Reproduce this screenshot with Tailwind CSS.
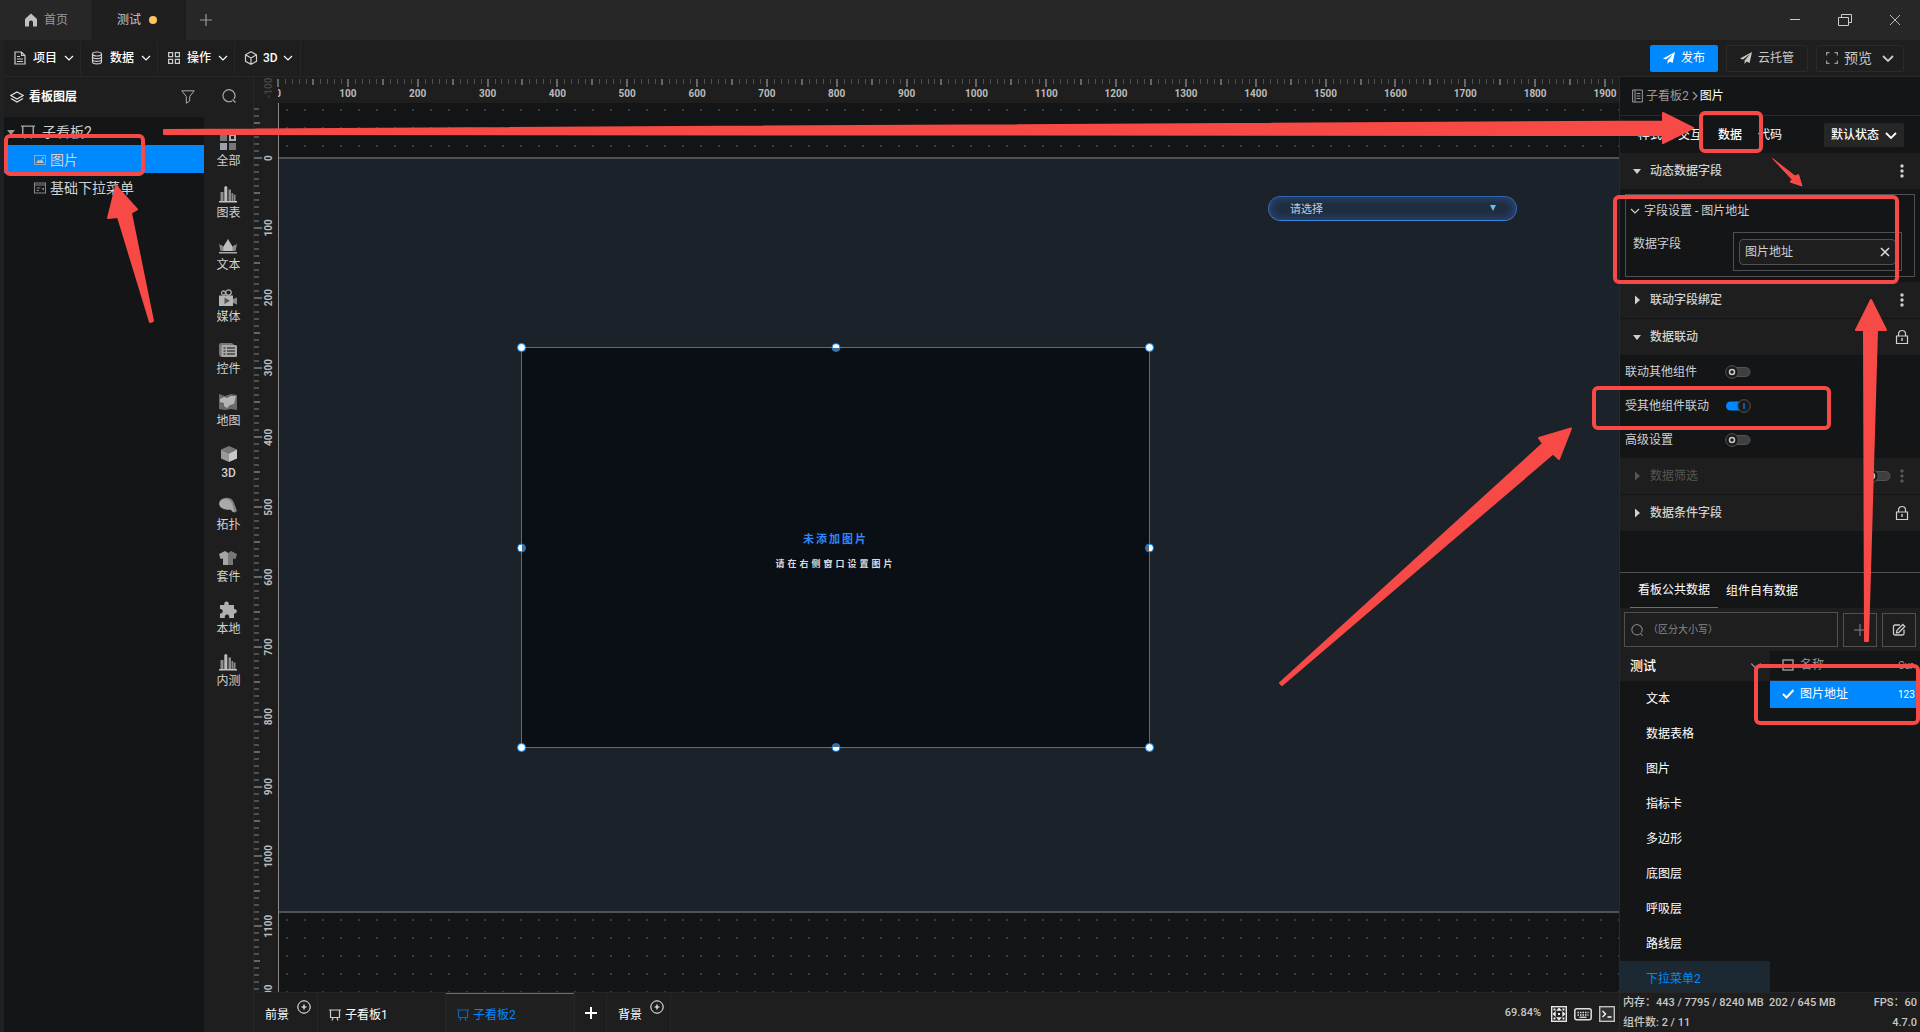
<!DOCTYPE html>
<html lang="zh-CN">

<head>
  <meta charset="UTF-8">
  <meta name="viewport" content="width=device-width, initial-scale=1.0">
  <title>测试</title>
  <script src="https://cdn.jsdelivr.net/npm/@tailwindcss/browser@4"></script>
  <style>
    body {
      font-family: Roboto, "Noto Sans CJK SC", sans-serif;
    }
  </style>
</head>

<body class="relative flex flex-col h-screen overflow-hidden bg-[#1f2125] text-xs text-[#d0d0d0]">

  <!-- icons -->
  <svg class="hidden">
    <symbol id="i-down" viewBox="0 0 10 10"><path d="M1 3l4 4 4-4" fill="none" stroke="currentColor" stroke-width="1.2" /></symbol>
    <symbol id="i-down-bold" viewBox="0 0 12 12"><path d="M1 4l5 5 5-5" fill="none" stroke="currentColor" stroke-width="1.8" /></symbol>
    <symbol id="i-tri-down" viewBox="0 0 10 10"><path d="M1 3h8L5 8z" fill="currentColor" /></symbol>
    <symbol id="i-tri-right" viewBox="0 0 10 10"><path d="M3 0.5v9L8 5z" fill="currentColor" /></symbol>
    <symbol id="i-more" viewBox="0 0 4 14"><g fill="currentColor"><circle cx="2" cy="2" r="1.7" /><circle cx="2" cy="7" r="1.7" /><circle cx="2" cy="12" r="1.7" /></g></symbol>
    <symbol id="i-lock" viewBox="0 0 14 16"><path d="M1.5 7h11v7.5h-11zM3.5 7V5a3.5 3.5 0 0 1 7 0v2" fill="none" stroke="currentColor" stroke-width="1.2" /><path d="M7 9v3" stroke="currentColor" stroke-width="1.4" /></symbol>
    <symbol id="i-send" viewBox="0 0 12 12"><path d="M12 0L0 6.4l3 1.2L10 2 4.6 8.4V12l2-2.6L9.6 11z" fill="currentColor" /></symbol>
    <symbol id="i-search" viewBox="0 0 14 14"><path d="M10 11.9A6 6 0 1 1 12 10M10.5 10.5L13.5 13.5" fill="none" stroke="currentColor" stroke-width="1.2" /></symbol>
    <symbol id="i-board" viewBox="0 0 12 12"><path d="M0 1h12M1.5 1v7.5h9V1M4 9l-1 2.5M8 9l1 2.5" fill="none" stroke="currentColor" stroke-width="1.2" /></symbol>
    <symbol id="i-plus-circle" viewBox="0 0 14 14"><circle cx="7" cy="7" r="6.2" fill="none" stroke="currentColor" /><path d="M4.5 7h5M7 4.5v5" stroke="currentColor" stroke-width="1.2" /></symbol>
    <symbol id="i-off" viewBox="0 0 26 14"><rect x="6" y="2.5" width="19" height="9" rx="4.5" fill="#3d3f40" stroke="#555" /><circle cx="7" cy="7" r="6.3" fill="#1a1a1a" stroke="#555" /><circle cx="7" cy="7" r="2.5" fill="none" stroke="#ccc" stroke-width="1.5" /></symbol>
    <symbol id="i-on" viewBox="0 0 26 14"><rect x="1" y="2.5" width="19" height="9" rx="4.5" fill="#0088ff" /><circle cx="19" cy="7" r="6.3" fill="#1a1a1a" stroke="#555" /><path d="M19 4v6" stroke="#0a66bb" stroke-width="1.8" /></symbol>
    <symbol id="i-chart" viewBox="0 0 18 18"><path d="M1.5 7h3v9h-3zM9.500 4.500H12V16H9.500zM12.500 8h1.500v8h-1.500zM14.500 9.500H16.500V16h-2z" fill="#8c8c8c" /><path d="M5.300 2.500Q5.300 1 6.800 1T8.300 2.500V16h-3z" fill="#bcbcbc" /><path d="M0 16h18v1.500H0z" fill="#c4c4c4" /></symbol>
  </svg>

  <header class="flex h-10 shrink-0 bg-[#272727] text-[#9a9a9a]">
    <a href="#" class="flex w-[92px] items-center justify-center gap-1.5">
      <svg class="size-3.5" viewBox="0 0 14 14"><path d="M7 0.5L13 6v7.5H9V9.5a2 2 0 0 0-4 0v4H1V6z" fill="#c0c0c0" /></svg>首页
    </a>
    <a href="#" class="flex w-[94px] items-center gap-2 border-x border-[#1a1a1a] bg-[#1f1f1f] pl-6 text-[#c8c8c8]">测试<span class="size-2 rounded-full bg-[#ffc45c]"></span></a>
    <button class="w-10" aria-label="新建标签"><svg class="mx-auto size-3" viewBox="0 0 12 12"><path d="M6 0v12M0 6h12" stroke="#9a9a9a" stroke-width="1.2" /></svg></button>
    <div class="ml-auto flex">
      <button class="w-[50px]" aria-label="最小化"><svg class="mx-auto h-3 w-2.5" viewBox="0 0 10 12"><path d="M0 5.5h10" stroke="#ccc" /></svg></button>
      <button class="w-[50px]" aria-label="还原"><svg class="mx-auto h-3 w-3.5" viewBox="0 0 14 12"><path d="M0.5 3.5h10v8H0.5zM3.5 3V0.5h10v8H11" fill="none" stroke="#ccc" /></svg></button>
      <button class="w-[50px]" aria-label="关闭"><svg class="mx-auto size-3" viewBox="0 0 12 12"><path d="M1 1l10 10M11 1L1 11" stroke="#bbb" /></svg></button>
    </div>
  </header>

  <div class="ml-1 flex min-h-0 flex-1 flex-col">
    <nav class="flex h-[37px] shrink-0 items-center border-b border-[#272727] bg-[#1e1e1e] font-medium text-white">
      <button class="flex h-[34px] w-[77px] items-center gap-[7px] border-r border-[#262626] pl-2.5">
        <svg class="h-3.5 w-3" viewBox="0 0 12 14"><path d="M1 1h6.5L11 4.5V13H1zM3 5.5h3M3 8h6M3 10.5h6M7.5 1v3.500H11" fill="none" stroke="#ccc" stroke-width="1.2" /></svg>
        项目<svg class="size-2.5"><use href="#i-down" /></svg>
      </button>
      <button class="flex h-[34px] w-[77px] items-center gap-[7px] border-r border-[#262626] pl-2.5">
        <svg class="h-3.5 w-3" viewBox="0 0 12 14"><g fill="none" stroke="#ccc" stroke-width="1.2"><ellipse cx="6" cy="3" rx="4.5" ry="2" /><path d="M1.5 3v8c0 2.5 9 2.5 9 0V3M1.5 5.7c0 2.5 9 2.5 9 0M1.5 8.4c0 2.5 9 2.5 9 0" /></g></svg>
        数据<svg class="size-2.5"><use href="#i-down" /></svg>
      </button>
      <button class="flex h-[34px] w-[77px] items-center gap-[7px] border-r border-[#262626] pl-2.5">
        <svg class="size-3" viewBox="0 0 12 12"><path d="M.6.6h4v4h-4zM7.4.6h4v4h-4zM.6 7.4h4v4h-4zM7.4 7.4h4v4h-4z" fill="none" stroke="#ccc" stroke-width="1.2" /></svg>
        操作<svg class="size-2.5"><use href="#i-down" /></svg>
      </button>
      <button class="flex h-[34px] w-[66px] items-center gap-[5px] border-r border-[#262626] pl-[9px]">
        <svg class="size-3.5" viewBox="0 0 14 14"><path d="M7 .8l5.500 3v6.500L7 13.300l-5.500-3V3.800zM1.500 3.800L7 7l5.500-3.200M7 7v6" fill="none" stroke="#ccc" stroke-width="1.2" /></svg>
        3D<svg class="size-2.5"><use href="#i-down" /></svg>
      </button>
      <div class="ml-auto mr-4 flex gap-2 font-normal">
        <button class="flex h-[27px] w-[68px] items-center justify-center gap-1.5 rounded-xs bg-[#0088ff]"><svg class="size-3"><use href="#i-send" /></svg>发布</button>
        <button class="flex h-[27px] w-[82px] items-center justify-center gap-1.5 rounded-xs border border-[#2a2a2a] text-[#c8c8c8]"><svg class="size-3"><use href="#i-send" /></svg>云托管</button>
        <button class="flex h-[27px] w-[88px] items-center justify-center gap-1.5 rounded-xs border border-[#2a2a2a] text-sm text-[#c8c8c8]">
          <svg class="size-3" viewBox="0 0 12 12"><path d="M.6 3.5V.6h2.9M8.500.6h2.900v2.900M11.400 8.500v2.900H8.500M3.500 11.400H.6V8.500" fill="none" stroke="#999" stroke-width="1.2" /></svg>
          预览<svg class="ml-1 size-3"><use href="#i-down-bold" /></svg>
        </button>
      </div>
    </nav>

    <div class="flex min-h-0 flex-1">
      <!-- layers -->
      <aside class="w-[200px] shrink-0 bg-[#141517]">
        <div class="flex h-10 items-center gap-[5px] bg-[#1e1e1e] pl-1.5 pr-[9px] font-bold text-white">
          <svg class="size-3.5" viewBox="0 0 14 14"><path d="M7 2l6.2 3.5L7 9 .8 5.5zM1 8.5L7 12l6-3.500" fill="none" stroke="#e0e0e0" stroke-width="1.3" /></svg>
          看板图层
          <svg class="ml-auto size-3.5" viewBox="0 0 14 14"><path d="M.8.8h12.4L8.7 6.5V11l-3.400 2.300V6.500z" fill="none" stroke="#aaa" /></svg>
        </div>
        <ul class="text-sm">
          <li class="flex h-7 items-center gap-[5px] pl-0.5 pt-0.5">
            <svg class="size-2.5 text-[#999]"><use href="#i-tri-down" /></svg>
            <svg class="mr-0.5 size-3.5 text-[#aaa]"><use href="#i-board" /></svg>子看板2
          </li>
          <li class="flex h-7 items-center gap-1 bg-[#0088ff] pl-[30px] pt-0.5">
            <svg class="size-3" viewBox="0 0 12 12"><rect x=".5" y="1.5" width="11" height="9" fill="none" stroke="#9ba7b5" /><path d="M2 9l2.500-3.500L6 7l1.500-2L10 9z" fill="#b8c0c8" /><circle cx="9" cy="4" r=".9" fill="#b8c0c8" /></svg>图片
          </li>
          <li class="flex h-7 items-center gap-1 pl-[30px] pt-0.5">
            <svg class="size-3" viewBox="0 0 12 12"><rect x=".5" y="1" width="11" height="10" fill="none" stroke="#888" /><path d="M0 3h12M2.500 6h4M2.500 8.500h2.500" stroke="#888" stroke-width="1.2" /><path d="M10 5.500v3L7.500 7z" fill="#888" /></svg>基础下拉菜单
          </li>
        </ul>
      </aside>

      <!-- component library -->
      <nav class="flex w-[50px] shrink-0 flex-col items-center border-r border-[#282828] bg-[#1e1e1e] leading-4">
        <button class="flex h-14 items-start pt-3" aria-label="搜索"><svg class="size-3.5 text-[#aaa]"><use href="#i-search" /></svg></button>
        <button class="flex h-[52px] flex-col items-center gap-0.5"><svg class="size-[18px]" viewBox="0 0 18 18"><path d="M1 1h7v7H1zM10 10h7v7h-7z" fill="#777" /><path d="M1 10h7v7H1z" fill="#9da0a8" /><path d="M11 2h5v5h-5z" fill="#1e1e1e" stroke="#aaadb5" stroke-width="2" /></svg>全部</button>
        <button class="flex h-[52px] flex-col items-center gap-0.5"><svg class="size-[18px]"><use href="#i-chart" /></svg>图表</button>
        <button class="flex h-[52px] flex-col items-center gap-0.5"><svg class="size-[18px]" viewBox="0 0 18 18"><path d="M0 7l5 2.500L9 2l4 7.500L18 7l-1.500 7h-15z" fill="#888" /><path d="M9 2c1 4 5.500 5 4.500 12h-9C3.500 7 8 6 9 2z" fill="#bdbdbd" /><path d="M0 15h18v1.500H0z" fill="#aaa" /></svg>文本</button>
        <button class="flex h-[52px] flex-col items-center gap-0.5"><svg class="size-[18px]" viewBox="0 0 18 18"><circle cx="4.5" cy="4" r="2" fill="none" stroke="#aaa" stroke-width="1.3" /><circle cx="9.5" cy="3.5" r="2.7" fill="none" stroke="#aaa" stroke-width="1.3" /><path d="M0 6.5h14V17H0z" fill="#b5b5b5" /><path d="M14 10l4-1.500v7L14 14z" fill="#888" /><path d="M5.500 8.500l5.500 3.300-5.500 3.200z" fill="#555" /></svg>媒体</button>
        <button class="flex h-[52px] flex-col items-center gap-0.5"><svg class="size-[18px]" viewBox="0 0 18 18"><path d="M2 2h11l2 2H4v12H2q-2-1-2-3V4q0-2 2-2z" fill="#777" /><rect x="2.5" y="4" width="15.5" height="12" rx="1.5" fill="#aaa" /><path d="M4.500 7h2M8 7h8M4.500 10h2M8 10h8M4.500 13h2M8 13h8" stroke="#444" stroke-width="1.3" /></svg>控件</button>
        <button class="flex h-[52px] flex-col items-center gap-0.5"><svg class="size-[18px]" viewBox="0 0 18 18"><path d="M0 1l6 2 6-2 6 1v15l-6-1-6 1-6-1z" fill="#6a6a6a" /><path d="M1 6l4-2 3 1 4-2 5 0-1 4-1 4-4 1-3 3-3-2 0-3-4-1z" fill="#b5b5b5" /></svg>地图</button>
        <button class="flex h-[52px] flex-col items-center gap-0.5 font-medium"><svg class="size-[18px]" viewBox="0 0 18 18"><path d="M9 1l8 3.500L9 8.500 1 4.500z" fill="#777" /><path d="M1 4.500l8 4V17l-8-3.500z" fill="#999" /><path d="M17 4.500l-8 4V17l8-3.500z" fill="#c8c8c8" /></svg>3D</button>
        <button class="flex h-[52px] flex-col items-center gap-0.5"><svg class="size-[18px]" viewBox="0 0 18 18"><path d="M0 7q0-5 6-6 6-1 8.500 4 1 2 3.500 9l-2 1.500q-3 0-4-2.500Q1 13 0 7z" fill="#858585" /><path d="M.5 8Q0 3 5.500 2q5-.5 7.500 4.500L15.500 15q-2 0-4-3Q2 13 .5 8z" fill="#aaa" /></svg>拓扑</button>
        <button class="flex h-[52px] flex-col items-center gap-0.5"><svg class="size-[18px]" viewBox="0 0 18 18"><path d="M6 2L0 5l1.500 5L4 9.500V16h5V4z" fill="#a5a5a5" /><path d="M12 2l6 3-1.500 5L14 9.500V16H9V4z" fill="#777" /></svg>套件</button>
        <button class="flex h-[52px] flex-col items-center gap-0.5"><svg class="size-[18px]" viewBox="0 0 18 18"><path d="M1 4h4.500a2.300 2.300 0 1 1 4 0H15v4a2.300 2.300 0 1 1 0 4.500V17h-5a2.300 2.300 0 1 0-4 0H1v-4.500a2.300 2.300 0 1 0 0-4.500z" fill="#b0b0b0" /></svg>本地</button>
        <button class="flex h-[52px] flex-col items-center gap-0.5"><svg class="size-[18px]"><use href="#i-chart" /></svg>内测</button>
      </nav>

      <!-- canvas -->
      <main class="flex min-w-0 flex-1 flex-col bg-[#1e1e1e]">
        <svg id="rulerX" class="h-[26px] w-full shrink-0 overflow-hidden text-[10px] font-bold"></svg>
        <div class="flex min-h-0 flex-1">
          <svg id="rulerY" class="h-full w-6 shrink-0 overflow-hidden text-[10px] font-bold"></svg>
          <div class="relative flex-1 overflow-hidden border-l border-[#8a8a8a] bg-[#131416] bg-[radial-gradient(#3c3c3e_1px,transparent_1px)] bg-size-[18px_18px] bg-position-[-1px_-2px]">
            <div class="absolute inset-x-0 top-[54px] h-[756px] border-y-2 border-[#505356] bg-[#1c222a]">
              <select aria-label="请选择" class="absolute left-[989px] top-[37px] h-[25px] w-[249px] appearance-none rounded-full border border-[#2f67b4] border-b-[#3b83dc] bg-[#202b3b] pl-[21px] pt-[3px] text-[11px] text-[#b8cfe2] shadow-[inset_0_0_12px_#284f8a]">
                <option>请选择</option>
              </select>
              <svg class="absolute left-[1211px] top-[46px] h-1.5 w-1.5" viewBox="0 0 6 6"><path d="M0 0h6L3 6z" fill="#67b8ff" /></svg>

              <div class="absolute left-[242px] top-[188px] flex h-[401px] w-[629px] flex-col items-center justify-center gap-1 border border-[#0f7fe6] bg-[#0a0e15] pt-2">
                <p class="text-[11px] leading-5 font-bold tracking-[2px] text-[#2f86ff]">未添加图片</p>
                <p class="text-[9px] leading-5 font-bold tracking-[3px] text-[#dcdcdc]">请在右侧窗口设置图片</p>
                <span class="absolute -left-[5px] -top-[5px] size-[9px] rounded-full border border-[#0088ff] bg-white"></span>
                <span class="absolute left-1/2 -top-[5px] size-[9px] -translate-x-1/2 rounded-full border border-[#0088ff] bg-linear-to-b from-white from-60% to-[#666] to-60%"></span>
                <span class="absolute -right-[5px] -top-[5px] size-[9px] rounded-full border border-[#0088ff] bg-white"></span>
                <span class="absolute -left-[5px] top-1/2 size-[9px] -translate-y-1/2 rounded-full border border-[#0088ff] bg-linear-to-r from-white from-60% to-[#666] to-60%"></span>
                <span class="absolute -right-[5px] top-1/2 size-[9px] -translate-y-1/2 rounded-full border border-[#0088ff] bg-linear-to-l from-white from-60% to-[#666] to-60%"></span>
                <span class="absolute -bottom-[5px] -left-[5px] size-[9px] rounded-full border border-[#0088ff] bg-white"></span>
                <span class="absolute -bottom-[5px] left-1/2 size-[9px] -translate-x-1/2 rounded-full border border-[#0088ff] bg-linear-to-t from-white from-60% to-[#666] to-60%"></span>
                <span class="absolute -bottom-[5px] -right-[5px] size-[9px] rounded-full border border-[#0088ff] bg-white"></span>
              </div>
            </div>
          </div>
        </div>

        <footer class="flex h-10 shrink-0 border-t border-[#262629] text-white">
          <button class="flex w-16 items-center gap-2 border-r border-[#262629] pl-[11px] pt-1">前景<svg class="size-3.5 -mt-4"><use href="#i-plus-circle" /></svg></button>
          <button class="flex w-32 items-center gap-1 border-r border-[#262629] pl-[11px] pt-1"><svg class="size-3 text-[#ccc]"><use href="#i-board" /></svg>子看板1</button>
          <button class="flex w-32 items-center gap-1 border-t border-[#0088ff] bg-[#202020] pl-[11px] pt-1 text-[#0088ff]"><svg class="size-3 text-[#0a66bb]"><use href="#i-board" /></svg>子看板2</button>
          <button class="w-[33px] border-x border-[#262629]" aria-label="添加看板"><svg class="mx-auto size-3" viewBox="0 0 12 12"><path d="M6 0v12M0 6h12" stroke="#fff" stroke-width="2" /></svg></button>
          <button class="flex w-16 items-center gap-2 border-r border-[#262629] pl-[11px] pt-1">背景<svg class="size-3.5 -mt-4"><use href="#i-plus-circle" /></svg></button>
          <div class="ml-auto mr-1 flex items-center gap-[7px] pt-0.5 text-[#c8c8c8]">
            <span class="mr-[3px] text-[11px] font-medium">69.84%</span>
            <button aria-label="适应画布"><svg class="size-4" viewBox="0 0 16 16"><rect x=".7" y=".7" width="14.6" height="14.6" fill="#222" stroke="#e8e8e8" stroke-width="1.4" /><path d="M8 1.5l3 3.2H5zM8 14.5l3-3.200H5zM1.500 8l3.200-3v6zM14.500 8l-3.200-3v6zM7 7h2v2H7zM2.500 2.500h2v2h-2zM11.500 2.500h2v2h-2zM2.500 11.500h2v2h-2zM11.500 11.500h2v2h-2z" fill="#f0f0f0" /></svg></button>
            <button aria-label="快捷键"><svg class="h-4 w-[18px]" viewBox="0 0 18 16"><rect x=".8" y="2.8" width="16.4" height="11" rx="2" fill="#222" stroke="#e0e0e0" stroke-width="1.5" /><path d="M3.500 6.500h11M3.500 9h11" stroke="#e0e0e0" stroke-width="1.4" stroke-dasharray="1.5 1" /><path d="M5.500 11.300h7" stroke="#e0e0e0" stroke-width="1.3" /></svg></button>
            <button aria-label="控制台"><svg class="size-4" viewBox="0 0 16 16"><rect x=".7" y=".7" width="14.6" height="14.6" fill="#333" stroke="#c0c0c0" stroke-width="1.4" /><path d="M3.500 5l3 3-3 3M8.500 11h4" fill="none" stroke="#fff" stroke-width="1.3" /></svg></button>
          </div>
        </footer>
      </main>

      <!-- properties -->
      <aside class="flex w-[301px] shrink-0 flex-col border-l border-[#29292b] bg-[#141517]">
        <div class="flex h-[39px] shrink-0 items-center border-b border-[#29292b] pl-3 text-[#999]">
          <svg class="mr-[3px] h-3.5 w-[11px]" viewBox="0 0 11 14"><path d="M.6 1h9.8v12H.6zM3 1v12M4.500 4.500h4M4.500 7h4M4.500 9.500h4" fill="none" stroke="#999" /></svg>
          <a href="#">子看板2</a><svg class="ml-px size-2.5 -rotate-90"><use href="#i-down" /></svg><span class="text-white">图片</span>
        </div>
        <div class="flex h-[37px] shrink-0 items-center gap-4 pl-[18px] pr-4 text-white">
          <button>样式</button><button>交互</button><button class="font-medium">数据</button><button>代码</button>
          <button class="ml-auto flex h-6 w-20 items-center justify-center gap-1.5 rounded-xs bg-[#262626] font-medium">默认状态<svg class="size-3"><use href="#i-down-bold" /></svg></button>
        </div>

        <button class="flex h-9 shrink-0 items-center gap-2 bg-[#1e1e1e] pl-3 pr-4 font-medium"><svg class="size-2.5"><use href="#i-tri-down" /></svg>动态数据字段<svg class="ml-auto h-3.5 w-1"><use href="#i-more" /></svg></button>
        <div class="mx-[5px] my-[5px] h-[83px] shrink-0 border border-[#505050]">
          <button class="flex h-8 items-center gap-1 pl-1"><svg class="size-2.5"><use href="#i-down" /></svg>字段设置 - 图片地址</button>
          <div class="flex items-start justify-between pl-[7px] pr-3">
            <label for="field" class="pt-[9px]">数据字段</label>
            <div class="mt-[5px] h-[39px] w-[169px] border border-[#505050] p-[5px] pt-1.5">
              <div class="flex h-[26px] w-[157px] items-center rounded-sm border border-[#505050] bg-[#1e1e1e] pl-[5px] pr-[5px]">
                <input id="field" value="图片地址" class="min-w-0 flex-1">
                <button aria-label="清除"><svg class="size-2.5" viewBox="0 0 10 10"><path d="M1 1l8 8M9 1L1 9" stroke="#ddd" stroke-width="1.5" /></svg></button>
              </div>
            </div>
          </div>
        </div>
        <button class="mb-px flex h-9 shrink-0 items-center gap-2 bg-[#1e1e1e] pl-3 pr-4 font-medium"><svg class="size-2.5"><use href="#i-tri-right" /></svg>联动字段绑定<svg class="ml-auto h-3.5 w-1"><use href="#i-more" /></svg></button>
        <button class="flex h-9 shrink-0 items-center gap-2 bg-[#1e1e1e] pl-3 pr-[11px] font-medium"><svg class="size-2.5"><use href="#i-tri-down" /></svg>数据联动<svg class="ml-auto h-4 w-3.5"><use href="#i-lock" /></svg></button>
        <div class="grid shrink-0 auto-rows-[34px] pb-px pl-[5px]">
          <label class="relative flex items-center"><span class="w-[100px]">联动其他组件</span><input type="checkbox" class="peer sr-only"><svg class="h-3.5 w-[26px] peer-checked:hidden"><use href="#i-off" /></svg></label>
          <label class="relative flex items-center"><span class="w-[100px]">受其他组件联动</span><input type="checkbox" class="peer sr-only" checked><svg class="hidden h-3.5 w-[26px] peer-checked:block"><use href="#i-on" /></svg></label>
          <label class="relative flex items-center"><span class="w-[100px]">高级设置</span><input type="checkbox" class="peer sr-only"><svg class="h-3.5 w-[26px] peer-checked:hidden"><use href="#i-off" /></svg></label>
        </div>
        <div class="mb-px flex h-9 shrink-0 items-center gap-2 bg-[#1e1e1e] pl-3 pr-4 text-[#555]">
          <svg class="size-2.5"><use href="#i-tri-right" /></svg>
          <label for="filter">数据筛选</label><input id="filter" type="checkbox" class="sr-only" disabled>
          <svg class="ml-auto mr-px h-3.5 w-[26px]"><use href="#i-off" /></svg><svg class="h-3.5 w-1"><use href="#i-more" /></svg>
        </div>
        <button class="flex h-9 shrink-0 items-center gap-2 bg-[#1e1e1e] pl-3 pr-[11px] font-medium"><svg class="size-2.5"><use href="#i-tri-right" /></svg>数据条件字段<svg class="ml-auto h-4 w-3.5"><use href="#i-lock" /></svg></button>

        <div class="mt-[41px] flex h-9 shrink-0 border-t border-[#505050] pl-2.5 text-white">
          <button class="w-[88px] border-b border-[#0088ff]">看板公共数据</button><button class="w-[88px]">组件自有数据</button>
        </div>
        <div class="flex h-[43px] shrink-0 items-center gap-[5px] bg-[#1e1e1e] px-1">
          <label class="flex h-[35px] flex-1 items-center gap-[5px] border border-[#505050] pl-1.5">
            <svg class="size-3 text-[#888]"><use href="#i-search" /></svg>
            <input type="search" aria-label="搜索" placeholder="（区分大小写）" class="min-w-0 flex-1 text-[10px] placeholder:text-[#888]">
          </label>
          <button class="size-[34px] border border-[#505050]" aria-label="添加"><svg class="mx-auto size-3" viewBox="0 0 12 12"><path d="M6 0v12M0 6h12" stroke="#888" /></svg></button>
          <button class="size-[34px] border border-[#505050]" aria-label="编辑"><svg class="mx-auto size-3.5" viewBox="0 0 14 14"><path d="M8 2H3Q1.500 2 1.500 3.500v7Q1.500 12 3 12h7.500q1.500 0 1.500-1.500V6.500M4.500 9.800l.5-2.500L10.800 1.500l2 2L7 9.300z" fill="none" stroke="#ccc" stroke-width="1.3" /></svg></button>
        </div>
        <div class="flex min-h-0 flex-1 overflow-hidden">
          <div class="w-[150px] shrink-0 text-white">
            <button class="flex h-[30px] w-full items-center justify-between bg-[#1e1e1e] pl-2.5 pr-2 text-[13px] font-medium">测试<svg class="size-3 text-[#888]"><use href="#i-down" /></svg></button>
            <ul>
              <li class="flex h-[35px] items-center pl-[26px]">文本</li>
              <li class="flex h-[35px] items-center pl-[26px]">数据表格</li>
              <li class="flex h-[35px] items-center pl-[26px]">图片</li>
              <li class="flex h-[35px] items-center pl-[26px]">指标卡</li>
              <li class="flex h-[35px] items-center pl-[26px]">多边形</li>
              <li class="flex h-[35px] items-center pl-[26px]">底图层</li>
              <li class="flex h-[35px] items-center pl-[26px]">呼吸层</li>
              <li class="flex h-[35px] items-center pl-[26px]">路线层</li>
              <li class="flex h-[35px] items-center bg-[#1d2932] pl-[26px] text-[#0088ff]">下拉菜单2</li>
            </ul>
          </div>
          <div class="mr-1 flex-1 overflow-hidden">
            <table class="w-full table-fixed text-left">
              <thead>
                <tr class="h-[29px] border-b border-[#29292b] text-[#999]">
                  <th class="w-[30px] pl-3"><svg class="size-3" viewBox="0 0 12 12"><rect x="1" y="1" width="10" height="10" fill="none" stroke="#aaa" stroke-width="1.3" /></svg></th>
                  <th class="font-normal">名称</th>
                  <th class="w-[18px] text-[10px] font-normal">Cur</th>
                </tr>
              </thead>
              <tbody>
                <tr class="h-7 bg-[#0088ff] text-white">
                  <td class="pl-3"><svg class="size-3" viewBox="0 0 12 12"><path d="M1 6l3.500 3.500L11.500 2" fill="none" stroke="#fff" stroke-width="2" /></svg></td>
                  <td>图片地址</td>
                  <td class="text-[10px]">123</td>
                </tr>
              </tbody>
            </table>
          </div>
        </div>
        <footer class="h-10 shrink-0 border-t border-[#262629] bg-[#1e1e1e] pl-[3px] pr-[3px] text-[11px] leading-5 font-medium text-[#c8c8c8]">
          <p class="flex justify-between"><span>内存：443 / 7795 / 8240 MB&nbsp; 202 / 645 MB</span><span>FPS：60</span></p>
          <p class="flex justify-between"><span>组件数: 2 / 11</span><span>4.7.0</span></p>
        </footer>
      </aside>
    </div>
  </div>

  <!-- tutorial marks -->
  <svg class="pointer-events-none absolute inset-0 h-full w-full">
    <g fill="none" stroke="#f74a46" stroke-width="4">
      <rect x="6" y="136" width="137" height="38" rx="4" />
      <rect x="1701" y="113" width="60" height="38" rx="4" />
      <rect x="1615" y="197" width="282" height="85" rx="4" />
      <rect x="1594" y="388" width="235" height="40" rx="4" />
      <rect x="1756" y="666" width="162" height="57" rx="4" />
    </g>
    <g fill="#f74a46" stroke="#f74a46" stroke-width="2" stroke-linejoin="round">
      <path d="M116 186L108 218L118 217L150 322L153 321L131 213L137 209.500z" />
      <path d="M164 130L1663 121.500V113L1693 128L1663 143V135L164 134z" />
      <path d="M1772.500 158.500L1795 176L1798.500 174.500L1802 186L1790 182L1792 179.500z" stroke-width="1" />
      <path d="M1280 683L1543 443.500L1539 438L1571 428.500L1559 459L1553 453.500L1282 685z" />
      <path d="M1871 300L1856 330H1864L1865 641H1868L1877 330H1886z" />
    </g>
  </svg>

  <script>
    const NS = 'http://www.w3.org/2000/svg';
    const zoom = 0.6984;

    function add(parent, tag, attrs, text) {
      const el = document.createElementNS(NS, tag);
      for (const key in attrs) el.setAttribute(key, attrs[key]);
      if (text !== undefined) el.textContent = text;
      parent.appendChild(el);
    }

    function tick(svg, pos, unit, top, vertical) {
      const big = unit % 50 === 0;
      const len = unit % 100 === 0 ? 8 : big ? 6 : 5;
      const w = big || vertical ? 2 : 1;
      const fill = big ? '#666' : '#505050';
      const p = Math.round(pos) - (w > 1 ? 1 : 0);
      add(svg, 'rect', vertical
        ? { x: top, y: p, width: len, height: w, fill }
        : { x: p, y: top, width: w, height: len, fill });
    }

    // board is 1920 units wide
    const rulerX = document.getElementById('rulerX');
    for (let u = 0; u <= 1920; u += 10) {
      const x = 24 + u * zoom;
      tick(rulerX, x, u, 2, false);
      if (u % 100 === 0)
        add(rulerX, 'text', { x: x, y: 20, 'text-anchor': 'middle', fill: '#bbb' }, u);
    }
    add(rulerX, 'rect', { x: 0, y: 10, width: 24, height: 16, fill: '#1e1e1e' });
    add(rulerX, 'text', { transform: 'translate(18 11) rotate(-90)', 'text-anchor': 'middle', fill: '#444' }, '-100');

    const rulerY = document.getElementById('rulerY');
    for (let u = -70; u <= 1200; u += 10) {
      const y = 55 + u * zoom;
      tick(rulerY, y, u, 0, true);
      if (u % 100 === 0)
        add(rulerY, 'text', { transform: `translate(18 ${y}) rotate(-90)`, 'text-anchor': 'middle', fill: '#bbb' }, u);
    }
  </script>
</body>

</html>
